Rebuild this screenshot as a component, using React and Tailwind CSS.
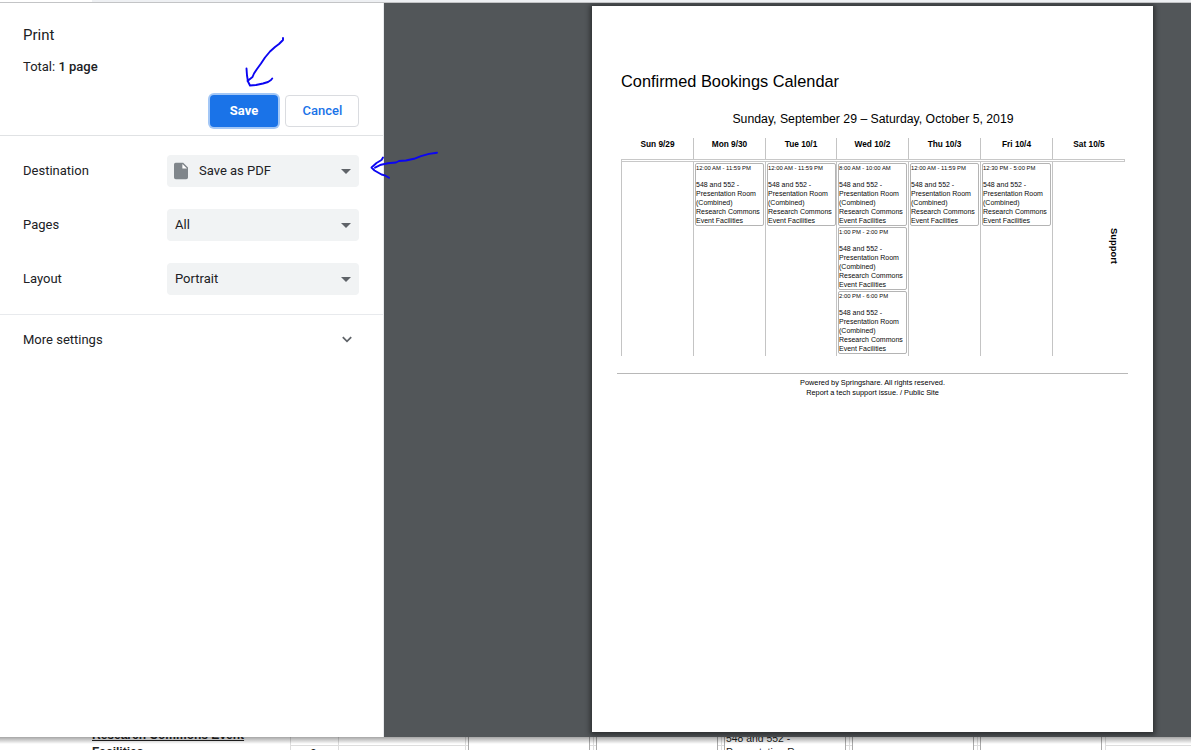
const room = ['548 and 552 -', 'Presentation Room', '(Combined)', 'Research Commons', 'Event Facilities'];

const days = [
  { label: 'Sun 9/29', events: [] },
  { label: 'Mon 9/30', events: ['12:00 AM - 11:59 PM'] },
  { label: 'Tue 10/1', events: ['12:00 AM - 11:59 PM'] },
  { label: 'Wed 10/2', events: ['8:00 AM - 10:00 AM', '1:00 PM - 2:00 PM', '2:00 PM - 6:00 PM'] },
  { label: 'Thu 10/3', events: ['12:00 AM - 11:59 PM'] },
  { label: 'Fri 10/4', events: ['12:30 PM - 5:00 PM'] },
  { label: 'Sat 10/5', events: [] },
];

function Event({ time }) {
  return (
    <div className="mb-px h-[63px] w-[69px] rounded-[2px] border border-[#b4b4b4] text-[7px] leading-[9px] whitespace-nowrap text-[#0a0a0a]">
      <div className="h-4 pt-px text-[5.9px] leading-[7px]">{time}</div>
      {room.map((line) => (
        <div key={line}>{line}</div>
      ))}
    </div>
  );
}

function SelectRow({ label, value, icon }) {
  return (
    <div className="flex h-[54px] items-center pl-[23px]">
      <div className="w-36">{label}</div>
      <div className="flex h-8 w-48 items-center rounded bg-[#f1f3f4] pr-2 pl-2">
        {icon && (
          <svg className="-ml-px mr-[10px] h-[18px] w-[15px]" viewBox="0 0 15 18">
            <path d="M2 .8h7.2L14 5.6v9.8a1.8 1.8 0 0 1-1.8 1.8H1.8A1.8 1.8 0 0 1 0 15.400V2.600A1.8 1.8 0 0 1 2 .8z" fill="#80868b" />
            <path d="M8.400 2v4.500H13z" fill="#fff" />
          </svg>
        )}
        <span className="flex-1">{value}</span>
        <svg className="h-[5px] w-[10px]" viewBox="0 0 10 5">
          <path d="M0 0h10L5 5z" fill="#5f6368" />
        </svg>
      </div>
    </div>
  );
}

function Sidebar() {
  return (
    <aside className="flex w-96 shrink-0 flex-col border-r border-[#e8eaed] bg-white text-[13px] text-[#202124]">
      <header className="flex h-[133px] flex-col border-b border-[#e0e2e4] pt-[21px] pr-6 pl-[23px]">
        <h1 className="h-[22px] text-[15px] leading-[22px]">Print</h1>
        <p className="mt-[11px] leading-5">
          Total: <span className="font-medium">1 page</span>
        </p>
        <div className="mt-[18px] flex justify-end gap-[7px]">
          <button className="h-8 w-[68px] rounded bg-[#1a73e8] font-bold text-white ring-2 ring-[#a3c7f6]">Save</button>
          <button className="h-8 w-[74px] rounded border border-[#dadce0] pl-px font-medium text-[#1a73e8]">Cancel</button>
        </div>
      </header>
      <section className="h-[179px] border-b border-[#e8eaed] pt-2">
        <SelectRow label="Destination" value="Save as PDF" icon />
        <SelectRow label="Pages" value="All" />
        <SelectRow label="Layout" value="Portrait" />
      </section>
      <div className="flex h-[49px] items-center justify-between pr-[31px] pl-[23px]">
        <span className="pt-px">More settings</span>
        <svg className="h-[7px] w-[10px]" viewBox="0 0 10 7">
          <path d="M.8 1.200 5 5.300 9.200 1.200" fill="none" stroke="#5f6368" strokeWidth="1.8" />
        </svg>
      </div>
    </aside>
  );
}

function Paper() {
  return (
    <article className="h-[726px] w-[561px] bg-white font-['Liberation_Sans',Arial,sans-serif] text-black shadow-[0_1px_5px_2px_rgba(0,0,0,0.45)]">
      <h2 className="pt-16 pl-[29px] text-[16.35px] leading-[22px]">Confirmed Bookings Calendar</h2>
      <p className="pt-[18px] pl-px text-center text-[12.27px] leading-[18px]">
        Sunday, September 29 – Saturday, October 5, 2019
      </p>
      <div className="ml-[29px] grid w-[504px] grid-cols-[72px_72px_71px_72px_72px_72px_73px] pt-[10px]">
        {days.map((day, i) => (
          <div
            key={day.label}
            className={
              i === 0
                ? 'h-[21px] pl-px text-center text-[8.3px] leading-[13px] font-bold'
                : 'h-[21px] border-l border-[#c4c4c4] text-center text-[8.3px] leading-[13px] font-bold'
            }
          >
            {day.label}
          </div>
        ))}
        <div className="col-span-7 h-[3px] border border-[#c8c8c8]" />
        {days.map((day) => (
          <div
            key={day.label}
            className={
              day.label === 'Sat 10/5'
                ? 'flex h-[194px] justify-end border-l border-[#c4c4c4] pt-[66px] pr-[5px]'
                : 'h-[194px] border-l border-[#c4c4c4] pt-px pl-px'
            }
          >
            {day.events.map((time) => (
              <Event key={time} time={time} />
            ))}
            {day.label === 'Sat 10/5' && (
              <span className="h-10 text-[9.4px] leading-3 font-bold [writing-mode:vertical-rl]">Support</span>
            )}
          </div>
        ))}
      </div>
      <footer className="mt-[17px] ml-[25px] w-[511px] border-t border-[#b8b8b8] pt-1 text-center text-[7.35px] leading-[10px]">
        <p>Powered by Springshare. All rights reserved.</p>
        <p>Report a tech support issue. / Public Site</p>
      </footer>
    </article>
  );
}

function PageBehind() {
  return (
    <div className="relative h-[13px] overflow-hidden bg-white font-['Liberation_Sans',Arial,sans-serif] text-[#222]">
      <svg className="absolute inset-0 h-[13px] w-[1191px]" viewBox="0 0 1191 13" shapeRendering="crispEdges">
        <path
          d="M290.500 0V13M338.500 0V13M465.500 0V13M593.500 0V13M721.500 0V13M849.500 0V13M977.500 0V13M1105.500 0V13M290 8.500H468M589 8.500H596M717 8.500H724M845 8.500H852M973 8.500H980M1105 8.500H1191"
          stroke="#dddddd"
        />
        <path
          d="M468.500 0V13M589.500 0V13M596.500 0V13M717.500 0V13M724.500 0V13M845.500 0V13M852.500 0V13M973.500 0V13M980.500 0V13M1101.500 0V13"
          stroke="#aaaaaa"
        />
      </svg>
      <div className="absolute -top-[10px] left-[92px] text-[12px] leading-4 font-bold whitespace-nowrap">
        <div className="underline">Research Commons Event</div>
        <div className="pt-px">Facilities</div>
      </div>
      <div className="absolute top-[9px] left-[310px] text-[12px] leading-4">2</div>
      <div className="absolute -top-[5px] left-[726px] text-[10.4px] leading-[14px] whitespace-nowrap">
        <div>548 and 552 -</div>
        <div>Presentation Room</div>
      </div>
      <div className="absolute inset-x-0 top-0 h-[7px] bg-linear-to-b from-black/35 to-transparent" />
    </div>
  );
}

export default function App() {
  return (
    <div className="relative flex h-[750px] w-[1191px] flex-col overflow-hidden bg-white font-[Roboto,sans-serif]">
      <div className="flex h-[3px] border-b border-[#c3c4c6]">
        <div className="w-[92px] bg-white" />
        <div className="flex-1 bg-[#eef0f3]" />
      </div>
      <main className="flex h-[734px]">
        <Sidebar />
        <section className="flex-1 overflow-hidden bg-[#525659] pt-[3px] pl-[208px]">
          <Paper />
        </section>
      </main>
      <PageBehind />
      <svg
        className="pointer-events-none absolute inset-0 h-[750px] w-[1191px]"
        viewBox="0 0 1191 750"
        fill="none"
        stroke="#0b05f2"
        strokeWidth="1.900"
        strokeLinecap="round"
        strokeLinejoin="round"
      >
        <path d="M283 38v2l-4 4-4 3-5 4.500-5 6-4 6-4 5.500-3 4.500-1.500 3.500-5 4M246.500 68.500l.5 7 1 6 2 4 6-.5 7-1.500 5-1.500 3-2 1.200-1.500" />
        <path d="M437 152.700l-8 1.200-8 2.200-7 2.700-8 1.700-7 .5-3 1.500-8 .7-7 1.500-6 3M383 157.500l-1.500 2.500-5 3-5 4.500 3 3 7 4 4 1.200 3.500 2" />
      </svg>
    </div>
  );
}
